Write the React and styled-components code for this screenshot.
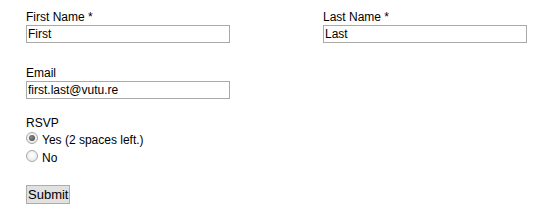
import React from "react";
import { styled, createGlobalStyle } from "styled-components";

const GlobalStyle = createGlobalStyle`
  html, body {
    margin: 0;
    padding: 0;
    background: #ffffff;
  }
  body {
    font-family: "Liberation Sans", Arial, sans-serif;
    font-size: 12px;
    color: #000;
  }
`;

const App = () => {
  return (
    <>
      <GlobalStyle />
      <Form onSubmit={(e) => e.preventDefault()}>
        <NameRow>
          <Field>
            <Label>First Name *</Label>
            <TextInput type="text" defaultValue="First" />
          </Field>
          <Field>
            <Label>Last Name *</Label>
            <TextInput type="text" defaultValue="Last" />
          </Field>
        </NameRow>

        <Field $top={23}>
          <Label>Email</Label>
          <TextInput type="text" defaultValue="first.last@vutu.re" />
        </Field>

        <Field $top={17}>
          <Label>RSVP</Label>
          <Options>
            <Option>
              <Radio type="radio" name="rsvp" defaultChecked />
              <span>Yes (2 spaces left.)</span>
            </Option>
            <Option>
              <Radio type="radio" name="rsvp" />
              <span>No</span>
            </Option>
          </Options>
        </Field>

        <SubmitButton type="submit">Submit</SubmitButton>
      </Form>
    </>
  );
};

export default App;

const Form = styled.form`
  padding: 10px 26px 0;
  display: flex;
  flex-direction: column;
  align-items: flex-start;
`;

const NameRow = styled.div`
  display: grid;
  grid-template-columns: 297px 204px;
`;

const Field = styled.div`
  display: flex;
  flex-direction: column;
  align-items: flex-start;
  margin-top: ${(props) => props.$top || 0}px;
`;

const Label = styled.label`
  display: block;
  line-height: 15px;
  height: 15px;
`;

const TextInput = styled.input`
  box-sizing: border-box;
  width: 204px;
  height: 18px;
  margin: 0;
  padding: 0 1px;
  border: 1px solid #a9a9a9;
  border-radius: 0;
  font-family: "Liberation Sans", Arial, sans-serif;
  font-size: 12px;
  line-height: 14px;
  color: #000;
  background: #fff;
  outline: none;
`;

const Options = styled.div`
  display: flex;
  flex-direction: column;
  margin-top: 1px;
`;

const Option = styled.label`
  display: flex;
  align-items: flex-start;
  height: 18px;
  line-height: 14px;

  span {
    padding-top: 1px;
  }
`;

const Radio = styled.input`
  appearance: none;
  box-sizing: border-box;
  width: 12px;
  height: 12px;
  margin: 0 4px 0 0;
  border: 1px solid #a6a6a6;
  border-radius: 50%;
  background: radial-gradient(circle at 50% 40%, #ffffff 0%, #e4e4e4 100%);
  position: relative;

  &:checked::after {
    content: "";
    position: absolute;
    left: 2px;
    top: 2px;
    width: 6px;
    height: 6px;
    border-radius: 50%;
    background: radial-gradient(circle at 40% 40%, #8a8a8a 0%, #3f3f3f 100%);
  }
`;

const SubmitButton = styled.button`
  box-sizing: border-box;
  margin-top: 17px;
  height: 19px;
  padding: 0 1px;
  border: 1px solid #adadad;
  border-radius: 0;
  background: #e1e1e1;
  font-family: "Liberation Sans", Arial, sans-serif;
  font-size: 13px;
  line-height: 15px;
  color: #000;
`;
